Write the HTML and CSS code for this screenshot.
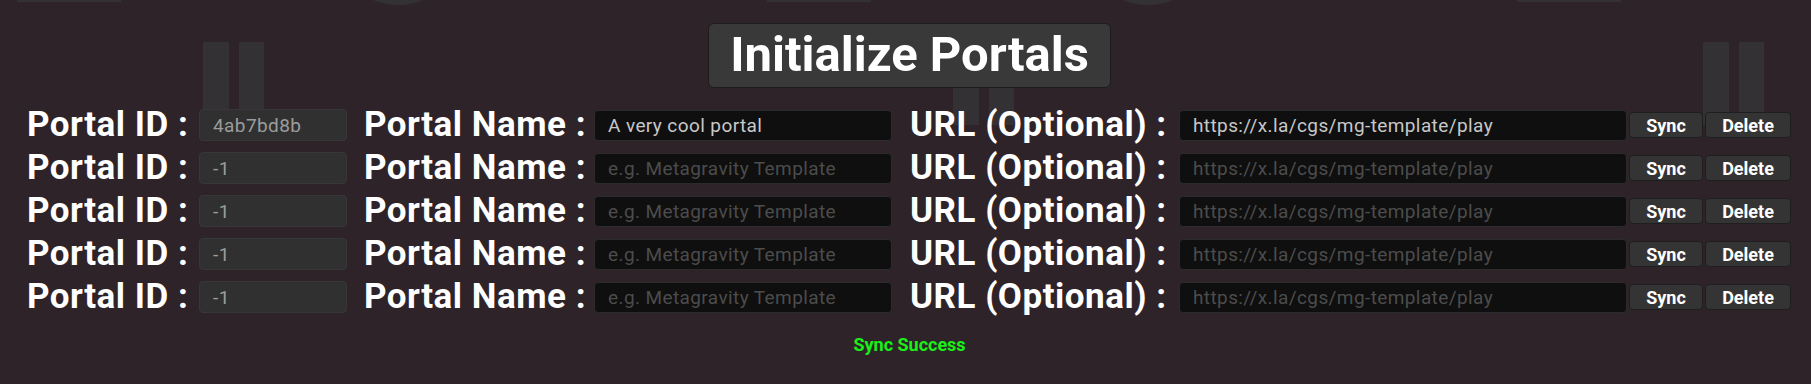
FILE: index.html
```html
<!DOCTYPE html>
<html lang="en">
<head>
<meta charset="utf-8">
<title>Initialize Portals</title>
<link rel="stylesheet" href="styles.css">
</head>
<body>
<div class="page">
  <svg class="backdrop" width="1811" height="384" aria-hidden="true">
    <defs>
      <pattern id="deco" x="0" y="0" width="750" height="384" patternUnits="userSpaceOnUse">
        <rect x="17" y="-20" width="104" height="22" fill="#333133"/>
        <circle cx="398" cy="-60" r="65" fill="#333133"/>
        <rect x="203" y="42" width="26" height="83" fill="#333133"/>
        <rect x="239" y="42" width="25" height="83" fill="#333133"/>
      </pattern>
    </defs>
    <rect width="1811" height="384" fill="url(#deco)"/>
  </svg>
  <main class="content">
    <div class="title-wrap">
      <h1 class="title">Initialize Portals</h1>
    </div>
    <div class="rows">
      <div class="row">
        <span class="label label-id">Portal ID :</span>
        <input class="field field-id" type="text" value="4ab7bd8b" readonly>
        <span class="label label-name">Portal Name :</span>
        <input class="field field-name" type="text" value="A very cool portal" placeholder="e.g. Metagravity Template">
        <span class="label label-url">URL (Optional) :</span>
        <input class="field field-url" type="text" value="https://x.la/cgs/mg-template/play" placeholder="https://x.la/cgs/mg-template/play">
        <button class="btn btn-sync">Sync</button>
        <button class="btn btn-delete">Delete</button>
      </div>
      <div class="row">
        <span class="label label-id">Portal ID :</span>
        <input class="field field-id" type="text" value="-1" readonly>
        <span class="label label-name">Portal Name :</span>
        <input class="field field-name" type="text" placeholder="e.g. Metagravity Template">
        <span class="label label-url">URL (Optional) :</span>
        <input class="field field-url" type="text" placeholder="https://x.la/cgs/mg-template/play">
        <button class="btn btn-sync">Sync</button>
        <button class="btn btn-delete">Delete</button>
      </div>
      <div class="row">
        <span class="label label-id">Portal ID :</span>
        <input class="field field-id" type="text" value="-1" readonly>
        <span class="label label-name">Portal Name :</span>
        <input class="field field-name" type="text" placeholder="e.g. Metagravity Template">
        <span class="label label-url">URL (Optional) :</span>
        <input class="field field-url" type="text" placeholder="https://x.la/cgs/mg-template/play">
        <button class="btn btn-sync">Sync</button>
        <button class="btn btn-delete">Delete</button>
      </div>
      <div class="row">
        <span class="label label-id">Portal ID :</span>
        <input class="field field-id" type="text" value="-1" readonly>
        <span class="label label-name">Portal Name :</span>
        <input class="field field-name" type="text" placeholder="e.g. Metagravity Template">
        <span class="label label-url">URL (Optional) :</span>
        <input class="field field-url" type="text" placeholder="https://x.la/cgs/mg-template/play">
        <button class="btn btn-sync">Sync</button>
        <button class="btn btn-delete">Delete</button>
      </div>
      <div class="row">
        <span class="label label-id">Portal ID :</span>
        <input class="field field-id" type="text" value="-1" readonly>
        <span class="label label-name">Portal Name :</span>
        <input class="field field-name" type="text" placeholder="e.g. Metagravity Template">
        <span class="label label-url">URL (Optional) :</span>
        <input class="field field-url" type="text" placeholder="https://x.la/cgs/mg-template/play">
        <button class="btn btn-sync">Sync</button>
        <button class="btn btn-delete">Delete</button>
      </div>
    </div>
    <p class="status">Sync Success</p>
  </main>
</div>
</body>
</html>
```

FILE: styles.css
```css
* {
  box-sizing: border-box;
}

html,
body {
  margin: 0;
  padding: 0;
  background: #2e2328;
}

body {
  width: 1811px;
  height: 384px;
  overflow: hidden;
  font-family: Roboto, "Liberation Sans", sans-serif;
}

.page {
  position: relative;
  width: 1811px;
  height: 384px;
  background: #2e2328;
}

.backdrop {
  position: absolute;
  left: 0;
  top: 0;
  display: block;
}

.content {
  position: relative;
  display: flex;
  flex-direction: column;
  padding-top: 23px;
}

.title-wrap {
  display: flex;
  justify-content: center;
  padding-left: 8px;
}

.title {
  margin: 0;
  height: 65px;
  width: 403px;
  display: flex;
  align-items: center;
  justify-content: center;
  background: #393939;
  border: 1px solid #1c1c1c;
  border-radius: 6px;
  color: #ffffff;
  font-size: 49px;
  font-weight: 700;
  line-height: 1;
  padding-bottom: 2px;
}

.rows {
  display: flex;
  flex-direction: column;
  gap: 11px;
  margin-top: 21px;
  padding-left: 27px;
}

.row {
  display: flex;
  align-items: center;
  height: 32px;
}

.label {
  flex: none;
  color: #ffffff;
  font-size: 35px;
  font-weight: 700;
  letter-spacing: 0.5px;
  line-height: 32px;
  white-space: nowrap;
}

.label-id {
  width: 172px;
}

.label-name {
  width: 230px;
  margin-left: 17px;
}

.label-url {
  width: 269px;
  margin-left: 18px;
}

.field {
  flex: none;
  height: 31px;
  border-radius: 4px;
  font-family: Roboto, "Liberation Sans", sans-serif;
  font-size: 19px;
  letter-spacing: 0.4px;
  padding: 0 13px;
  outline: none;
}

.field-id {
  width: 148px;
  height: 32px;
  background: #303030;
  border: 1px solid #373737;
  color: #9c9c9c;
}

.field-name {
  width: 298px;
  background: #0f0f0f;
  border: 1px solid #2b2b2b;
  color: #c8c8c8;
}

.field-url {
  width: 448px;
  background: #0f0f0f;
  border: 1px solid #2b2b2b;
  color: #c8c8c8;
}

.field::placeholder {
  color: #4c4c4c;
  opacity: 1;
}

.btn {
  flex: none;
  height: 26px;
  margin-left: 2px;
  padding: 1px 0 0;
  background: #343434;
  border: 1px solid #1e1e1e;
  border-radius: 4px;
  color: #ffffff;
  font-family: Roboto, "Liberation Sans", sans-serif;
  font-size: 18px;
  font-weight: 700;
  line-height: 23px;
}

.btn-sync {
  width: 74px;
}

.btn-delete {
  width: 86px;
}

.status {
  margin: 22px 0 0;
  padding-left: 8px;
  text-align: center;
  color: #19f019;
  font-size: 18px;
  font-weight: 700;
  line-height: 20px;
}
```
